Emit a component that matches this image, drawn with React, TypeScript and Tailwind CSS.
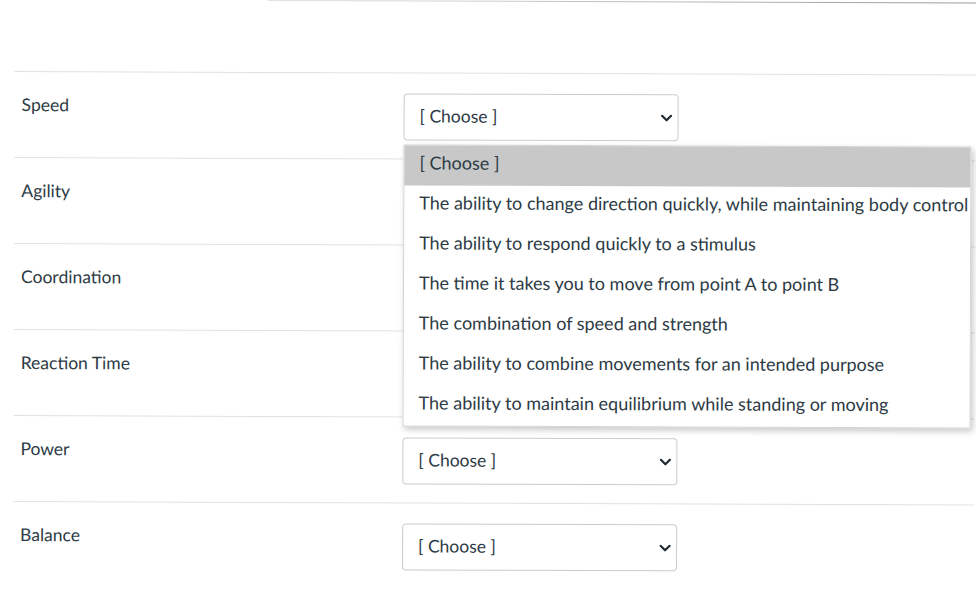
import React from "react";

const rows = ["Speed", "Agility", "Coordination", "Reaction Time", "Power", "Balance"];
const options = [
  "[ Choose ]",
  "The ability to change direction quickly, while maintaining body control",
  "The ability to respond quickly to a stimulus",
  "The time it takes you to move from point A to point B",
  "The combination of speed and strength",
  "The ability to combine movements for an intended purpose",
  "The ability to maintain equilibrium while standing or moving",
];

function Chevron() {
  return (
    <svg width="12" height="8" viewBox="0 0 12 8" className="shrink-0">
      <polyline points="1.5,1.5 6,6 10.5,1.5" fill="none" stroke="#1f2a33" strokeWidth="2.2" strokeLinecap="round" strokeLinejoin="round" />
    </svg>
  );
}

function SelectBox() {
  return (
    <div className="w-[275px] h-[47px] rounded-[4px] border border-[#c7cdd1] bg-white flex items-center justify-between pl-[15px] pr-[5px] text-[17.5px] text-[#2d3b45]">
      <span>[ Choose ]</span>
      <Chevron />
    </div>
  );
}

export default function App() {
  return (
    <div className="relative w-[976px] h-[608px] overflow-hidden bg-white" style={{ fontFamily: "Lato, 'Noto Sans', sans-serif" }}>
      <div className="origin-top-left rotate-[0.2deg]">
        <div className="ml-[268px] h-[1px] bg-gradient-to-r from-[#e4e4e4] to-[#9a9a9a] -mt-[1px]" />
        <div className="h-[71px]" />
        <div className="ml-[15px] relative">
          {rows.map((r) => (
            <div key={r} className="h-[86px] border-t border-[#dfe1e3] flex">
              <div className="w-[389px] pl-[7px] pt-[20px] text-[17.5px] text-[#2d3b45] leading-[26px]">{r}</div>
              <div className="pt-[20px]">
                {r === "Speed" || r === "Power" || r === "Balance" ? <SelectBox /> : null}
              </div>
            </div>
          ))}
          <div className="absolute left-[389px] top-[72px] w-[568px] bg-white border border-[#d4d4d4] shadow-[2px_3px_6px_rgba(0,0,0,0.22)] text-[18px] text-[#2d3b45]">
            {options.map((o, i) => (
              <div key={o} className={`h-[40px] flex items-center pl-[15px] pb-[6px] whitespace-nowrap ${i === 0 ? "bg-[#c8c8c8]" : ""}`}>
                {o}
              </div>
            ))}
          </div>
        </div>
      </div>
    </div>
  );
}
